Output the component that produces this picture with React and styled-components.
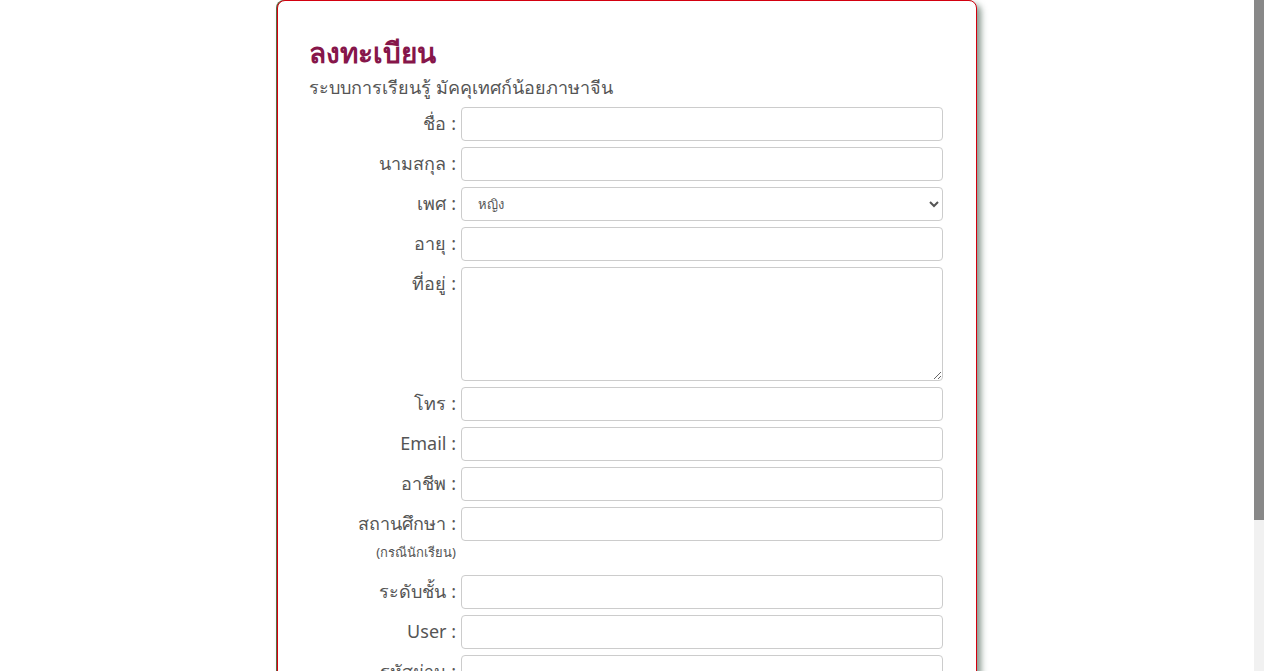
import React from "react";
import styled, { createGlobalStyle } from "styled-components";

const GlobalStyle = createGlobalStyle`
  html, body {
    margin: 0;
    padding: 0;
    background: #fff;
    font-family: "Noto Sans", "DejaVu Sans", sans-serif;
  }
`;

const Page = styled.div`
  display: flex;
  height: 100vh;
  overflow: hidden;
`;

const Main = styled.main`
  flex: 1;
  overflow-y: auto;
  scrollbar-width: none;
  &::-webkit-scrollbar {
    display: none;
  }
`;

const ScrollRail = styled.div`
  width: 10px;
  flex: none;
  background: #f1f1f1;
`;

const ScrollThumb = styled.div`
  height: 520px;
  background: #888;
`;

const Inner = styled.div`
  padding: 0 0 46px 0;
`;

const Card = styled.div`
  width: 700px;
  box-sizing: border-box;
  margin: 0 auto;
  padding: 30px 33px 40px 31px;
  background: #fff;
  border: 1px solid #d3000f;
  border-radius: 8px;
  box-shadow: -1px 0 0 #5b6b45, 4px 4px 6px rgba(70, 95, 80, 0.65);
`;

const Title = styled.h2`
  margin: 0;
  font-size: 28px;
  font-weight: 800;
  color: #86164a;
  line-height: 42px;
`;

const Subtitle = styled.p`
  margin: 0;
  font-size: 18px;
  color: #555;
  line-height: 28px;
`;

const Form = styled.form`
  display: flex;
  flex-direction: column;
  gap: 6px;
  margin-top: 6px;
`;

const Row = styled.div`
  display: grid;
  grid-template-columns: 147px 1fr;
  column-gap: 5px;
  align-items: start;
`;

const Label = styled.label`
  text-align: right;
  font-size: 18px;
  color: #555;
  line-height: 34px;
  display: flex;
  flex-direction: column;
  align-items: flex-end;
  margin-top: -1px;
`;

const Hint = styled.span`
  font-size: 13px;
  line-height: 20px;
  color: #555;
  margin: 2px 0 7px;
`;

const Input = styled.input`
  box-sizing: border-box;
  width: 100%;
  height: 34px;
  border: 1px solid #ccc;
  border-radius: 4px;
  padding: 6px 12px;
  font-size: 14px;
  font-family: inherit;
  background: #fff;
`;

const Select = styled.select`
  box-sizing: border-box;
  width: 100%;
  height: 34px;
  border: 1px solid #ccc;
  border-radius: 4px;
  padding: 4px 12px;
  font-size: 13px;
  font-family: inherit;
  color: #555;
  background: #fff;
`;

const TextArea = styled.textarea`
  box-sizing: border-box;
  width: 100%;
  height: 114px;
  border: 1px solid #ccc;
  border-radius: 4px;
  padding: 6px 12px;
  font-family: inherit;
  resize: vertical;
  display: block;
`;

const Actions = styled.div`
  display: grid;
  grid-template-columns: 147px 1fr;
  column-gap: 5px;
  margin-top: 10px;
`;

const Button = styled.button`
  justify-self: start;
  grid-column: 2;
  height: 38px;
  padding: 0 20px;
  font-size: 16px;
  font-family: inherit;
  color: #fff;
  background: #86164a;
  border: none;
  border-radius: 4px;
`;

const fields = [
  { label: "ชื่อ" },
  { label: "นามสกุล" },
  { label: "เพศ", kind: "select" },
  { label: "อายุ" },
  { label: "ที่อยู่", kind: "textarea" },
  { label: "โทร" },
  { label: "Email" },
  { label: "อาชีพ" },
  { label: "สถานศึกษา", hint: "(กรณีนักเรียน)" },
  { label: "ระดับชั้น" },
  { label: "User" },
  { label: "รหัสผ่าน", type: "password" },
  { label: "ยืนยันรหัสผ่าน", type: "password" },
];

const Field = ({ field }) => {
  if (field.kind === "select") {
    return (
      <Select defaultValue="หญิง">
        <option>หญิง</option>
        <option>ชาย</option>
      </Select>
    );
  }
  if (field.kind === "textarea") return <TextArea />;
  return <Input type={field.type || "text"} />;
};

export default function App() {
  return (
    <Page>
      <GlobalStyle />
      <Main>
        <Inner>
          <Card>
            <Title>ลงทะเบียน</Title>
            <Subtitle>ระบบการเรียนรู้ มัคคุเทศก์น้อยภาษาจีน</Subtitle>
            <Form>
              {fields.map((f) => (
                <Row key={f.label}>
                  <Label>
                    <span>{f.label} :</span>
                    {f.hint && <Hint>{f.hint}</Hint>}
                  </Label>
                  <Field field={f} />
                </Row>
              ))}
              <Actions>
                <Button type="button">ลงทะเบียน</Button>
              </Actions>
            </Form>
          </Card>
        </Inner>
      </Main>
      <ScrollRail>
        <ScrollThumb />
      </ScrollRail>
    </Page>
  );
}
